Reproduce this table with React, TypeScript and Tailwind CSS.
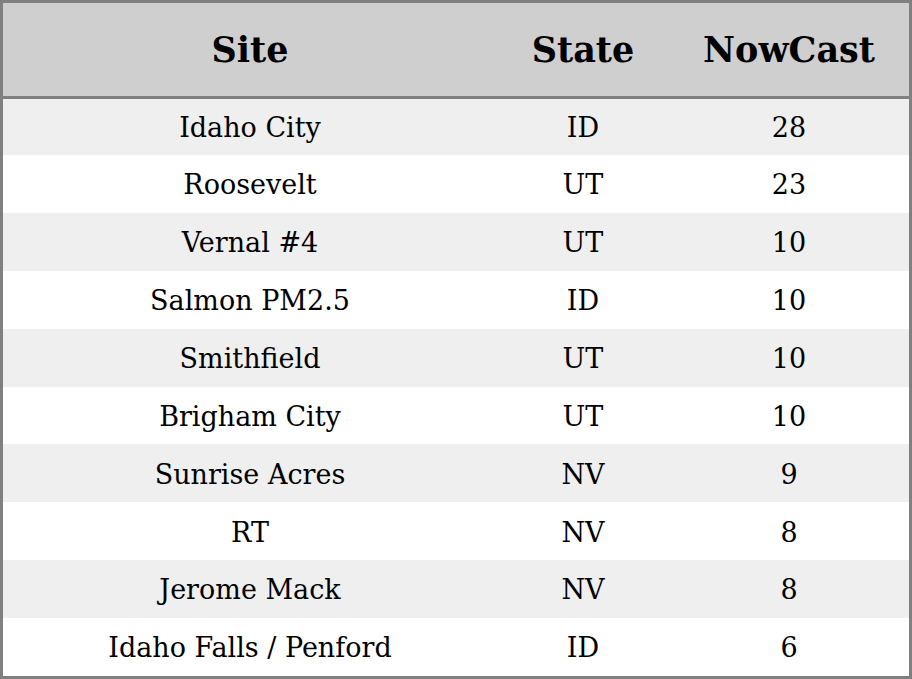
const rows = [
  { site: "Idaho City", state: "ID", nowcast: "28" },
  { site: "Roosevelt", state: "UT", nowcast: "23" },
  { site: "Vernal #4", state: "UT", nowcast: "10" },
  { site: "Salmon PM2.5", state: "ID", nowcast: "10" },
  { site: "Smithfield", state: "UT", nowcast: "10" },
  { site: "Brigham City", state: "UT", nowcast: "10" },
  { site: "Sunrise Acres", state: "NV", nowcast: "9" },
  { site: "RT", state: "NV", nowcast: "8" },
  { site: "Jerome Mack", state: "NV", nowcast: "8" },
  { site: "Idaho Falls / Penford", state: "ID", nowcast: "6" },
]

export default function App() {
  return (
    <div
      className="w-[912px] h-[679px] border-[3px] border-[#808080] bg-white text-black flex flex-col"
      style={{ fontFamily: '"DejaVu Serif", serif' }}
    >
      <div className="h-[96px] shrink-0 flex bg-[#cfcfcf] border-b-[3px] border-[#808080] text-[35px] font-bold pt-[2px]">
        <div className="w-[494px] flex items-center justify-center">Site</div>
        <div className="w-[172px] flex items-center justify-center">State</div>
        <div className="flex-1 flex items-center justify-center">NowCast</div>
      </div>
      <div className="flex-1 flex flex-col text-[27px]">
        {rows.map((r, i) => (
          <div
            key={i}
            className={`flex pt-[3px] ${i === 0 ? "h-[56px]" : "flex-1"} ${i % 2 === 0 ? "bg-[#efefef]" : "bg-white"}`}
          >
            <div className="w-[494px] flex items-center justify-center">{r.site}</div>
            <div className="w-[172px] flex items-center justify-center">{r.state}</div>
            <div className="flex-1 flex items-center justify-center">{r.nowcast}</div>
          </div>
        ))}
      </div>
    </div>
  )
}
